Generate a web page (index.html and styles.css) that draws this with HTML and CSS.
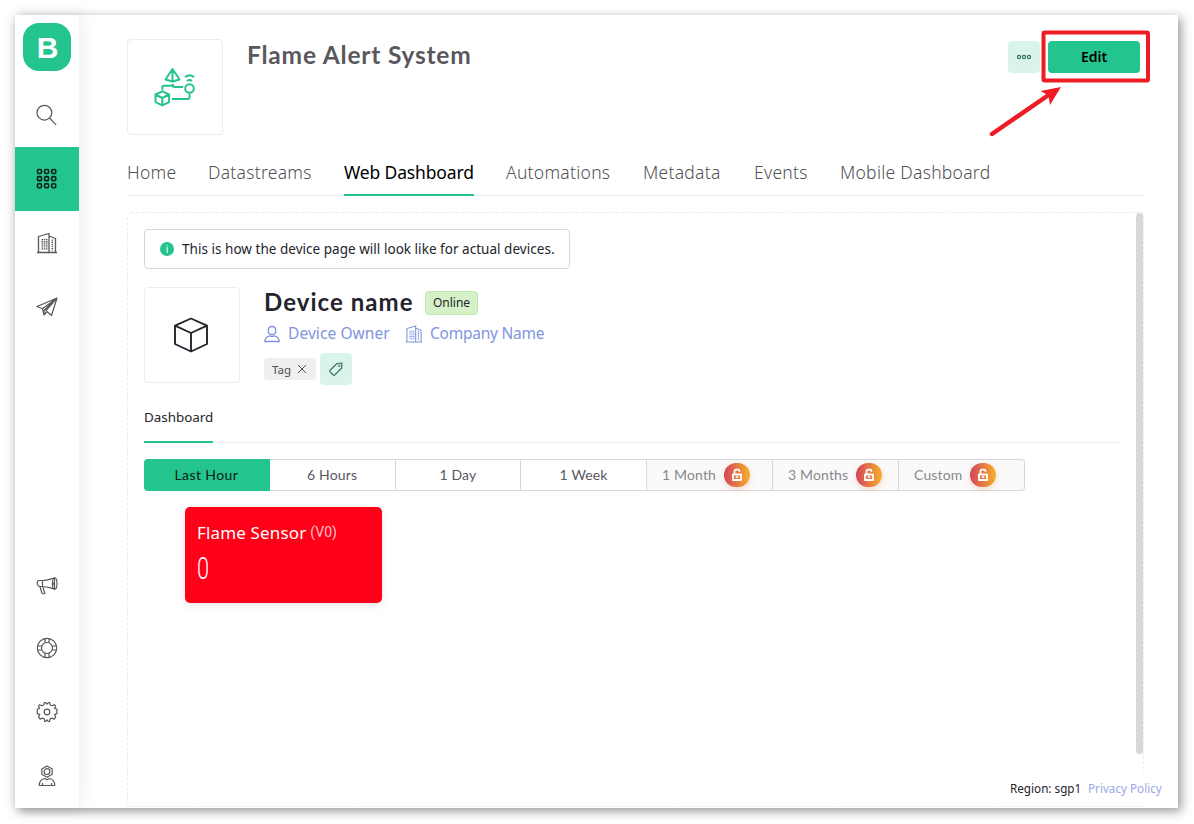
FILE: index.html
```html
<!DOCTYPE html>
<html lang="en">
<head>
<meta charset="utf-8">
<title>Flame Alert System</title>
<link rel="stylesheet" href="styles.css">
</head>
<body>
<svg class="defs" width="0" height="0">
  <symbol id="building" viewBox="0 0 24 24">
    <g fill="none" stroke="currentColor"><path d="M2 21.500h20M3.500 21V5.500L14 2.500V21M14 5l6.500 2.500V21" stroke-width="1.300"/><path d="M7.300 8v11M9.500 8v11M11.700 8v11M17.300 8.500v11" stroke-width="1.500" stroke-dasharray="1.300 .8"/></g>
  </symbol>
  <symbol id="cube" viewBox="0 0 36 36">
    <path d="M18 1.500L34 8.700V27L18 34.500L2 27V8.700zM2 8.700l16 7.300 16-7.300M18 16v18.500" fill="none" stroke="currentColor" stroke-width="1.900" stroke-linejoin="round"/>
  </symbol>
  <symbol id="lock" viewBox="0 0 12 14">
    <path d="M2 6.500h8v5.500H2zM3.500 6V3.200q0-1.500 1.500-1.500h2q1.500 0 1.500 1.500v.6M4.800 9.200h2.400" fill="none" stroke="currentColor" stroke-width="1.800" stroke-linejoin="round"/>
  </symbol>
</svg>
<div class="window">
  <nav class="sidebar">
    <div class="cell logo-cell"><div class="logo">B</div></div>
    <div class="cell"><svg class="nav-icon" viewBox="0 0 24 24"><circle cx="9.400" cy="9.700" r="7.400"/><path d="M14.600 15l6.500 6.800"/></svg></div>
    <div class="cell active"><svg class="nav-icon grid" viewBox="0 0 24 24"><g id="row"><rect x="2.500" y="2.500" width="4" height="4" rx="1.200"/><rect x="9.600" y="2.500" width="4" height="4" rx="1.200"/><rect x="16.700" y="2.500" width="4" height="4" rx="1.200"/></g><use href="#row" y="7.100"/><use href="#row" y="14.200"/></svg></div>
    <div class="cell"><svg class="nav-icon"><use href="#building"/></svg></div>
    <div class="cell"><svg class="nav-icon" viewBox="0 0 24 24"><path d="M22 3L2 11.500l5.500 2.200L22 3 9 15.500V20l3-3.500M22 3l-5.500 17.500-5.500-4.800L22 3M7.500 13.700L9 20"/></svg></div>
    <div class="push"></div>
    <div class="cell"><svg class="nav-icon megaphone" viewBox="0 0 24 24"><path d="M7.500 6.500H4Q2.200 6.500 2.200 9t1.800 3.500h3.500M7.500 6.500v6c5 0 8 1.500 12 2.500V4c-4 1-7 2.500-12 2.500M5 12.700l2 6.500q.3.800 2.800.3l-2-6.800"/><ellipse cx="19.700" cy="9.500" rx="2.300" ry="5.700"/><path d="M19.500 7.500q-1.500 2 0 4"/></svg></div>
    <div class="cell"><svg class="nav-icon" viewBox="0 0 24 24"><circle cx="12" cy="12" r="9.700"/><circle cx="12" cy="12" r="5.500"/><path d="M10 2.500V7M14 2.500V7M10 17v4.500M14 17v4.500M2.500 10H7M2.500 14H7M17 10h4.500M17 14h4.500"/></svg></div>
    <div class="cell"><svg class="nav-icon" viewBox="0 0 24 24"><circle cx="12" cy="12" r="2.800"/><path d="M10 2.500h-.5L8.700 5 7 5.800 4.800 4.700 3.500 6.200l1.200 2.300L2.300 9v4.600l2.500.8-1.200 2.700 1.500 2L7.500 18l1.700.9.6 2.600h.9l1.300-1.700 1.300 1.700h1.200l.6-2.600 1.700-.9 2.400 1.100 1.500-2-1.200-2.700 2.400-.8V9l-2.400-.5 1.200-2.300-1.300-1.500L17 5.800 15.300 5l-.8-2.500h-1L12 4.200 10.500 2.500z"/></svg></div>
    <div class="cell"><svg class="nav-icon" viewBox="0 0 24 24"><path d="M12 2l5.200 2.900v5.400L12 13.200l-5.200-2.900V4.900zM4.300 21.500q0-6 5.200-7l2.500 1.200 2.500-1.200q5.200 1 5.200 7zM7.500 21v-2M16.500 21v-2"/><circle cx="12" cy="7.600" r="2.900"/></svg></div>
  </nav>
  <main class="main">
    <header class="header">
      <div class="thumb"><svg class="template-icon" width="42" height="40" viewBox="0 0 42 40"><g fill="none" stroke="currentColor" stroke-width="2" stroke-linejoin="round"><path d="M18.500 2l7 10.500-7 2-7-2zM18.500 2v12.500M8.300 23v-2.500q0-1.700 1.700-1.700h7.500q1 0 1.200-1.500M19 17v1.800q0 1.200 1.200 1.200h9M18 32h15.500q2 0 2-2v-3"/><path d="M8.300 24.300l6.800 3.200v7.600l-6.800 3.300-6.800-3.300v-7.600zM1.500 27.500l6.800 3.500 6.800-3.500M8.300 31v7.400"/><circle cx="35.500" cy="21.500" r="4.300"/><path d="M31 10q4.500-3.500 9 0M33 14q2.500-1.800 5 0"/></g></svg></div>
      <h1 class="page-title">Flame Alert System</h1>
      <div class="actions">
        <button class="more"><svg width="16" height="6" viewBox="0 0 16 6"><g fill="none" stroke="currentColor" stroke-width="1.200"><circle cx="3" cy="3" r="1.600"/><circle cx="8" cy="3" r="1.600"/><circle cx="13" cy="3" r="1.600"/></g></svg></button>
        <button class="edit">Edit</button>
      </div>
    </header>
    <div class="tabs">
      <div class="tab t1">Home</div><div class="tab t2">Datastreams</div><div class="tab t3 selected">Web Dashboard</div><div class="tab t4">Automations</div><div class="tab t5">Metadata</div><div class="tab t6">Events</div><div class="tab t7">Mobile Dashboard</div>
    </div>
    <section class="preview">
      <div class="content">
        <div class="notice"><span class="info">i</span><span>This is how the device page will look like for actual devices.</span></div>
        <div class="device">
          <div class="thumb"><svg class="cube" width="36" height="36"><use href="#cube"/></svg></div>
          <div class="details">
            <div class="name-row"><h2 class="device-name">Device name</h2><span class="badge">Online</span></div>
            <div class="links">
              <svg width="16" height="18" viewBox="0 0 16 18"><path d="M8 1.500c5 0 5 8 0 8s-5-8 0-8M.8 16.500q0-4.500 4.700-5.700 2.500 1 5 0 4.700 1.200 4.700 5.700z" fill="none" stroke="currentColor" stroke-width="1.300"/></svg>
              <span class="owner">Device Owner</span>
              <svg class="company-icon" width="20" height="20"><use href="#building"/></svg>
              <span class="company">Company Name</span>
            </div>
            <div class="tags"><span class="tag">Tag <svg width="10" height="10" viewBox="0 0 10 10"><path d="M1 1l8 8M9 1L1 9" stroke="currentColor" stroke-width="1"/></svg></span><button class="add-tag"><svg width="16" height="16" viewBox="0 0 16 16"><path d="M9 2.500l5-.5-.3 5-7 7q-.8.600-1.500 0L2 10.800q-.6-.8 0-1.500z" fill="none" stroke="currentColor" stroke-width="1.200" stroke-linejoin="round"/><circle cx="11.300" cy="4.800" r="1" fill="none" stroke="currentColor" stroke-width=".8"/></svg></button></div>
          </div>
        </div>
        <div class="subtabs"><div class="subtab">Dashboard</div></div>
        <div class="ranges">
          <div class="range current">Last Hour</div><div class="range">6 Hours</div><div class="range">1 Day</div><div class="range">1 Week</div>
          <div class="range locked">1 Month<span class="lock"><svg width="12" height="14"><use href="#lock"/></svg></span></div>
          <div class="range locked">3 Months<span class="lock"><svg width="12" height="14"><use href="#lock"/></svg></span></div>
          <div class="range locked">Custom<span class="lock"><svg width="12" height="14"><use href="#lock"/></svg></span></div>
        </div>
        <div class="widget"><div class="widget-head"><span class="widget-title">Flame Sensor</span><span class="pin">(V0)</span></div><div class="value">0</div></div>
      </div>
      <div class="scrollbar"></div>
    </section>
  </main>
  <footer class="footer"><span class="region">Region: sgp1</span><a class="privacy">Privacy Policy</a></footer>
  <svg class="callout" width="170" height="120" viewBox="0 0 170 120"><rect x="63.500" y="12.500" width="104.500" height="48" rx="1" fill="none" stroke="#ee1c25" stroke-width="4"/><path d="M12 114L70 74" stroke="#ee1c25" stroke-width="4.500" stroke-linecap="round"/><path d="M81 67L60.500 71l8 4.500 1.500 9.500z" fill="#ee1c25"/></svg>
</div>
</body>
</html>
```
FILE: styles.css
```css
* { box-sizing: border-box; }
body { margin: 0; padding: 15px; height: 824px; overflow: hidden; background: #fff; font-family: "Noto Sans", sans-serif; color: #24242c; }
button { border: 0; padding: 0; font: inherit; }
h1, h2 { margin: 0; font-family: Lato, sans-serif; }
.defs { position: absolute; }
.window { position: relative; display: flex; width: 1163px; height: 793px; background: #fff; box-shadow: 3px 3px 10px rgba(0,0,0,.42); }
.sidebar { width: 64px; display: flex; flex-direction: column; flex: none; box-shadow: 1px 0 16px rgba(0,0,0,.09); color: #57575c; }
.cell { height: 64px; flex: none; display: flex; align-items: center; justify-content: center; }
.logo-cell { margin-bottom: 4px; }
.logo { width: 48px; height: 48px; border-radius: 16px; background: #24c48e; color: #fff; font: bold 30px/49px "Liberation Sans", sans-serif; text-align: center; padding-left: 1px; }
.nav-icon { width: 24px; height: 24px; fill: none; stroke: currentColor; stroke-width: 1.2; stroke-linejoin: round; }
.active { background: #24c48e; color: #0b2119; }
.grid { stroke-width: 1.6; }
.megaphone { margin-top: 4px; }
.push { flex: 1; }
.main { flex: 1; padding: 24px 34px 0 48px; display: flex; flex-direction: column; }
.header { display: flex; height: 96px; }
.thumb { width: 96px; height: 96px; flex: none; border: 1px solid #ececee; border-radius: 4px; display: flex; align-items: center; justify-content: center; }
.template-icon { color: #24c48e; }
.page-title { margin-left: 24px; font-size: 24.5px; line-height: 31px; color: #58585e; font-weight: 700; letter-spacing: .8px; white-space: nowrap; }
.actions { margin: 2px 4px 0 auto; display: flex; gap: 8px; height: 32px; }
.more { width: 32px; border-radius: 4px; background: #dbf4eb; color: #38765f; display: flex; align-items: center; justify-content: center; }
.edit { width: 92px; border-radius: 4px; background: #24c48e; color: #000; font-size: 14px; font-weight: 600; line-height: 32px; }
.tabs { height: 45px; margin-top: 16px; display: flex; gap: 32px; border-bottom: 1px solid #ececee; }
.tab { height: 45px; white-space: nowrap; font-size: 17.5px; line-height: 43px; color: #505056; font-weight: 300; letter-spacing: .27px; }
.selected { color: #000; font-weight: 400; letter-spacing: -.15px; border-bottom: 2px solid #24c48e; }
.t1 { width: 49px; } .t2 { width: 104px; } .t3 { width: 130px; } .t4 { width: 105px; } .t5 { width: 79px; } .t6 { width: 54px; } .t7 { width: 149px; }
.preview { margin-top: 16px; height: 595px; border: 1px dashed #ececee; border-radius: 4px; display: flex; }
.content { flex: 1; padding: 16px 16px 0 16px; }
.notice { width: 426px; height: 40px; border: 1px solid #d8d8da; border-radius: 4px; display: flex; align-items: center; padding-left: 15px; gap: 8px; font-size: 13.5px; letter-spacing: .03px; white-space: nowrap; }
.info { width: 14px; height: 14px; border-radius: 50%; background: #24c48e; color: #fff; font-size: 10px; line-height: 14px; text-align: center; }
.device { display: flex; gap: 24px; margin-top: 18px; height: 98px; }
.cube { color: #24242c; margin: 0 2px 1px 0; }
.name-row { display: flex; align-items: center; height: 32px; }
.device-name { width: 161px; font-size: 24px; line-height: 30px; padding-bottom: 2px; letter-spacing: 1.05px; white-space: nowrap; }
.badge { width: 53px; height: 24px; background: #d5f1c8; border: 1px solid #bde8a9; border-radius: 4px; font-size: 12px; line-height: 22px; text-align: center; }
.links { display: flex; align-items: center; height: 30px; color: #8194de; font-size: 15.5px; line-height: 28px; white-space: nowrap; }
.owner { width: 102px; margin: 0 0 2px 8px; letter-spacing: .08px; }
.company { margin-bottom: 2px; letter-spacing: -.25px; }
.company-icon { margin: 0 6px 0 14px; }
.tags { display: flex; align-items: center; gap: 4px; height: 32px; margin-top: 4px; }
.tag { display: flex; align-items: center; justify-content: space-between; width: 52px; height: 22px; padding: 0 9px 0 8px; border-radius: 4px; background: #efefef; color: #4e4e54; font-size: 11.5px; }
.add-tag { width: 32px; height: 32px; border-radius: 4px; background: #dbf4eb; color: #38765f; display: flex; align-items: center; justify-content: center; }
.subtabs { height: 58px; border-bottom: 1px solid #ececee; }
.subtab { width: 69px; height: 58px; padding-top: 15px; line-height: 34px; border-bottom: 2px solid #24c48e; font-size: 13.4px; white-space: nowrap; }
.ranges { display: flex; width: 881px; height: 32px; margin-top: 16px; font-family: Lato, sans-serif; font-size: 14px; letter-spacing: .15px; color: #58585e; }
.range { flex: 1 1 0; width: 0; padding-bottom: 1px; display: flex; align-items: center; justify-content: center; border: solid #d8d8da; border-width: 1px 1px 1px 0; }
.current { background: #24c48e; border-color: #24c48e; color: #0b2119; border-radius: 4px 0 0 4px; letter-spacing: .4px; }
.range.locked { flex: 0 0 126px; background: #fafafa; color: #88888c; justify-content: flex-start; padding-left: 15px; white-space: nowrap; }
.range:last-child { border-radius: 0 4px 4px 0; }
.lock { width: 26px; height: 24px; margin: 1px 0 0 8px; border-radius: 12px; background: linear-gradient(90deg,#d3435c,#f7b02c); color: #fff; display: flex; align-items: center; justify-content: center; box-shadow: 0 2px 6px rgba(225,110,60,.25); }
.widget { width: 197px; height: 96px; margin: 16px 0 0 41px; padding: 10px 12px; border-radius: 5px; background: #ff0018; color: #fff; box-shadow: 0 2px 8px rgba(0,0,0,.1); }
.widget-head { display: flex; gap: 4px; line-height: 32px; white-space: nowrap; }
.widget-title { font-size: 17px; letter-spacing: .15px; }
.pin { font: 14px/30px Roboto, sans-serif; color: #ffc2c8; }
.value { font: 300 31px/40px Roboto, sans-serif; transform: scaleX(.7); transform-origin: left; }
.scrollbar { width: 7px; height: 541px; border-radius: 4px; background: #d8d8d8; }
.footer { position: absolute; right: 0; bottom: 2px; width: 184px; height: 36px; padding-left: 16px; background: rgba(255,255,255,.8); display: flex; align-items: center; gap: 8px; font-size: 11.7px; white-space: nowrap; }
.region { width: 70px; }
.privacy { color: #99a9e6; }
.callout { position: absolute; left: 965px; top: 5px; pointer-events: none; }
```
